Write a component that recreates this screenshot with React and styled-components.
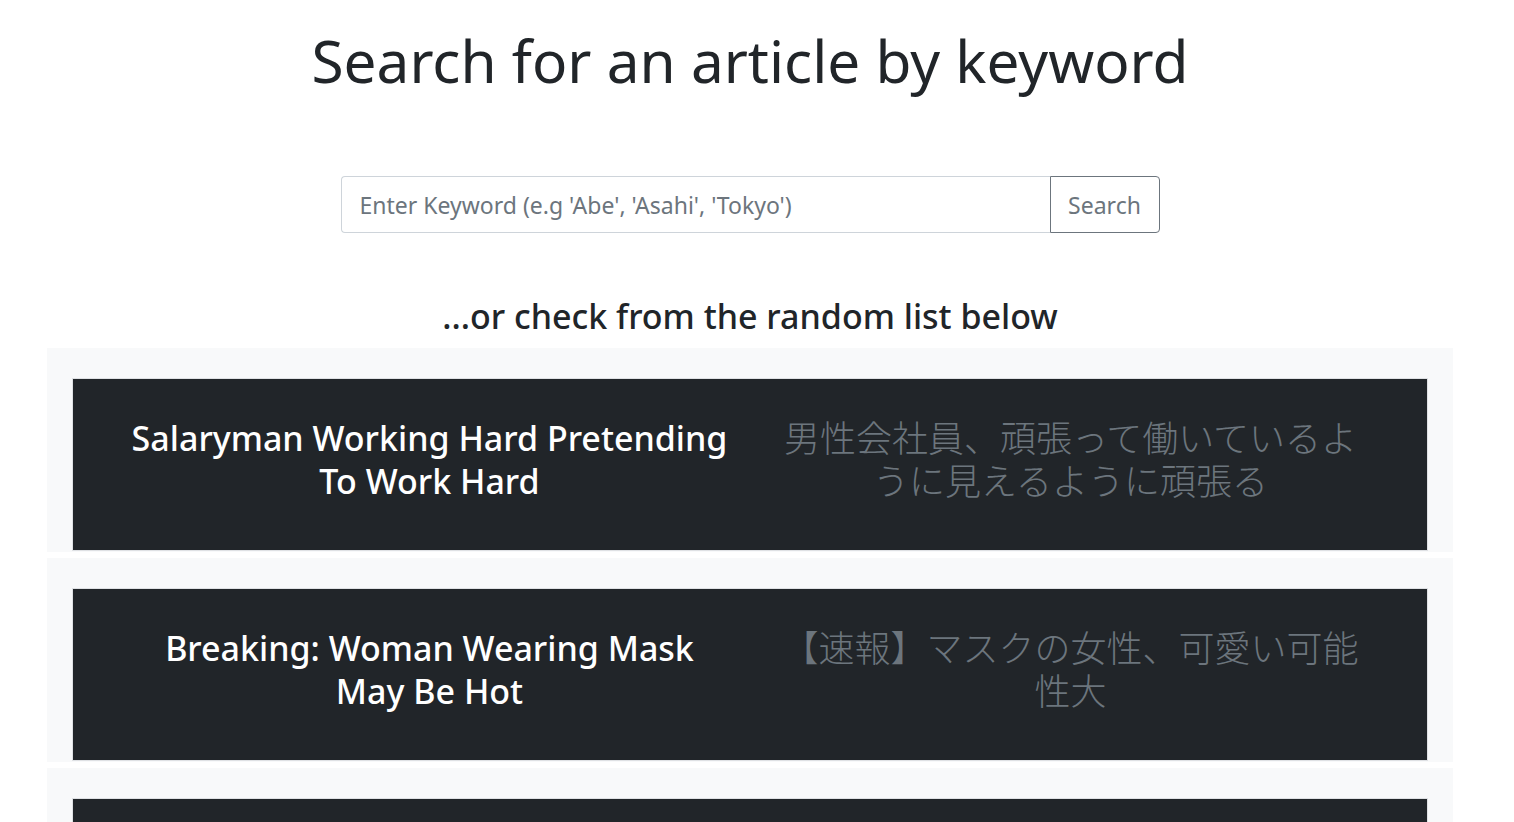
import styled, { createGlobalStyle } from "styled-components";

const GlobalStyle = createGlobalStyle`
  body {
    margin: 0;
    background: #fff;
    color: #212529;
    font-family: "Noto Sans", "Noto Sans CJK JP", sans-serif;
  }
  * { box-sizing: border-box; }
`;

const articles = [
  {
    en: "Salaryman Working Hard Pretending To Work Hard",
    ja: "男性会社員、頑張って働いているように見えるように頑張る",
  },
  {
    en: "Breaking: Woman Wearing Mask May Be Hot",
    ja: "【速報】マスクの女性、可愛い可能性大",
  },
  {
    en: "Local Man Finally Finds Seat On Yamanote Line",
    ja: "地元男性、ついに山手線で座席を見つける",
  },
];

const Page = styled.div`
  width: 1500px;
  padding-top: 24px;
`;

const Title = styled.h1`
  margin: 0;
  text-align: center;
  font-size: 58.5px;
  font-weight: 400;
  line-height: 72px;
`;

const SearchForm = styled.form`
  display: flex;
  width: 819px;
  height: 57px;
  margin: 80px auto 0;
`;

const KeywordInput = styled.input`
  flex: 1;
  height: 100%;
  padding: 0 18px;
  border: 1px solid #ced4da;
  border-right: none;
  border-radius: 4px 0 0 4px;
  font-family: inherit;
  font-size: 23px;
  color: #495057;
  outline: none;

  &::placeholder {
    color: #6c757d;
  }
`;

const SearchButton = styled.button`
  width: 110px;
  height: 100%;
  border: 1px solid #6c757d;
  border-radius: 0 4px 4px 0;
  background: transparent;
  color: #6c757d;
  font-family: inherit;
  font-size: 23px;
  cursor: pointer;
`;

const SubTitle = styled.h3`
  margin: 62px 0 11px;
  text-align: center;
  font-size: 34px;
  font-weight: 500;
  line-height: 42px;
`;

const List = styled.div`
  display: flex;
  flex-direction: column;
  gap: 6px;
  width: 1406px;
  margin: 0 auto;
`;

const Jumbo = styled.div`
  background: #f8f9fa;
  padding: 30px 25px 1px;
`;

const Card = styled.div`
  display: grid;
  grid-template-columns: 1fr 1fr;
  align-items: center;
  padding: 38px 36px 47px;
  background: #212529;
  border: 1px solid #dfe1e4;
`;

const Headline = styled.h3`
  margin: 0;
  padding: 0 20px;
  text-align: center;
  font-size: ${(p) => (p.$ja ? "36px" : "34px")};
  font-weight: ${(p) => (p.$ja ? 300 : 500)};
  line-height: 43px;
  color: ${(p) => (p.$ja ? "#6c757d" : "#fff")};
`;

export default function App() {
  return (
    <Page>
      <GlobalStyle />
      <Title>Search for an article by keyword</Title>
      <SearchForm onSubmit={(e) => e.preventDefault()}>
        <KeywordInput placeholder="Enter Keyword (e.g 'Abe', 'Asahi', 'Tokyo')" />
        <SearchButton type="submit">Search</SearchButton>
      </SearchForm>
      <SubTitle>...or check from the random list below</SubTitle>
      <List>
        {articles.map((a) => (
          <Jumbo key={a.en}>
            <Card>
              <Headline>{a.en}</Headline>
              <Headline $ja>{a.ja}</Headline>
            </Card>
          </Jumbo>
        ))}
      </List>
    </Page>
  );
}
